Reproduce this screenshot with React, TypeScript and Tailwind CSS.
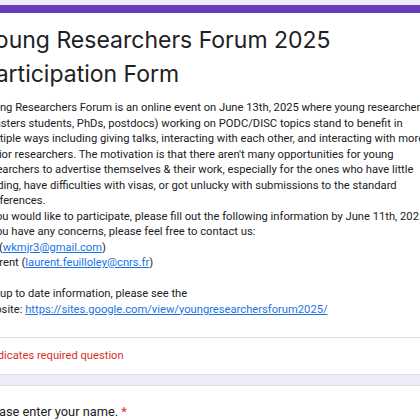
const intro = [
  "Young Researchers Forum is an online event on June 13th, 2025 where young researchers",
  "(masters students, PhDs, postdocs) working on PODC/DISC topics stand to benefit in",
  "multiple ways including giving talks, interacting with each other, and interacting with more",
  "senior researchers. The motivation is that there aren't many opportunities for young",
  "researchers to advertise themselves & their work, especially for the ones who have little",
  "funding, have difficulties with visas, or got unlucky with submissions to the standard",
  "conferences.",
];

function Link({ children }: { children: string }) {
  return <a className="text-[#1a73e8] underline">{children}</a>;
}

export default function App() {
  return (
    <div className="w-[420px] h-[420px] overflow-hidden bg-[#f0ebf8] pt-[5px]">
      <div className="-ml-[38px] w-[540px] bg-white border-t-[8px] border-[#673ab7] border-b border-b-[#dadce0]">
        <div className="pl-[19px] pt-[10px]">
          <h1 className="w-[400px] text-[23px] leading-[34px] text-[#202124] font-['Inter',sans-serif] font-normal">
            Young Researchers Forum 2025 Participation Form
          </h1>
          <div className="mt-[9px] text-[11.2px] leading-[15.5px] text-[#202124] font-['Roboto',sans-serif] whitespace-nowrap">
            {intro.map((line, i) => (
              <p key={i}>{line}</p>
            ))}
            <p>If you would like to participate, please fill out the following information by June 11th, 2025.</p>
            <p>If you have any concerns, please feel free to contact us:</p>
            <p>
              Bill (<Link>wkmjr3@gmail.com</Link>)
            </p>
            <p>
              Laurent (<Link>laurent.feuilloley@cnrs.fr</Link>)
            </p>
            <p>&nbsp;</p>
            <p>For up to date information, please see the</p>
            <p>
              website: <Link>https://sites.google.com/view/youngresearchersforum2025/</Link>
            </p>
          </div>
        </div>
        <div className="mt-[20px] border-t border-[#dadce0] pl-[19px] py-[10px] text-[11.2px] leading-[16px] text-[#d93025] font-['Roboto',sans-serif]">
          * Indicates required question
        </div>
      </div>
      <div className="h-[10px]" />
      <div className="-ml-[38px] w-[540px] bg-white border-t border-[#dadce0] h-[60px] pl-[19px] pt-[17px]">
        <p className="text-[12.8px] leading-[18px] text-[#202124] font-['Roboto',sans-serif]">
          Please enter your name. <span className="text-[#d93025]">*</span>
        </p>
      </div>
    </div>
  );
}
